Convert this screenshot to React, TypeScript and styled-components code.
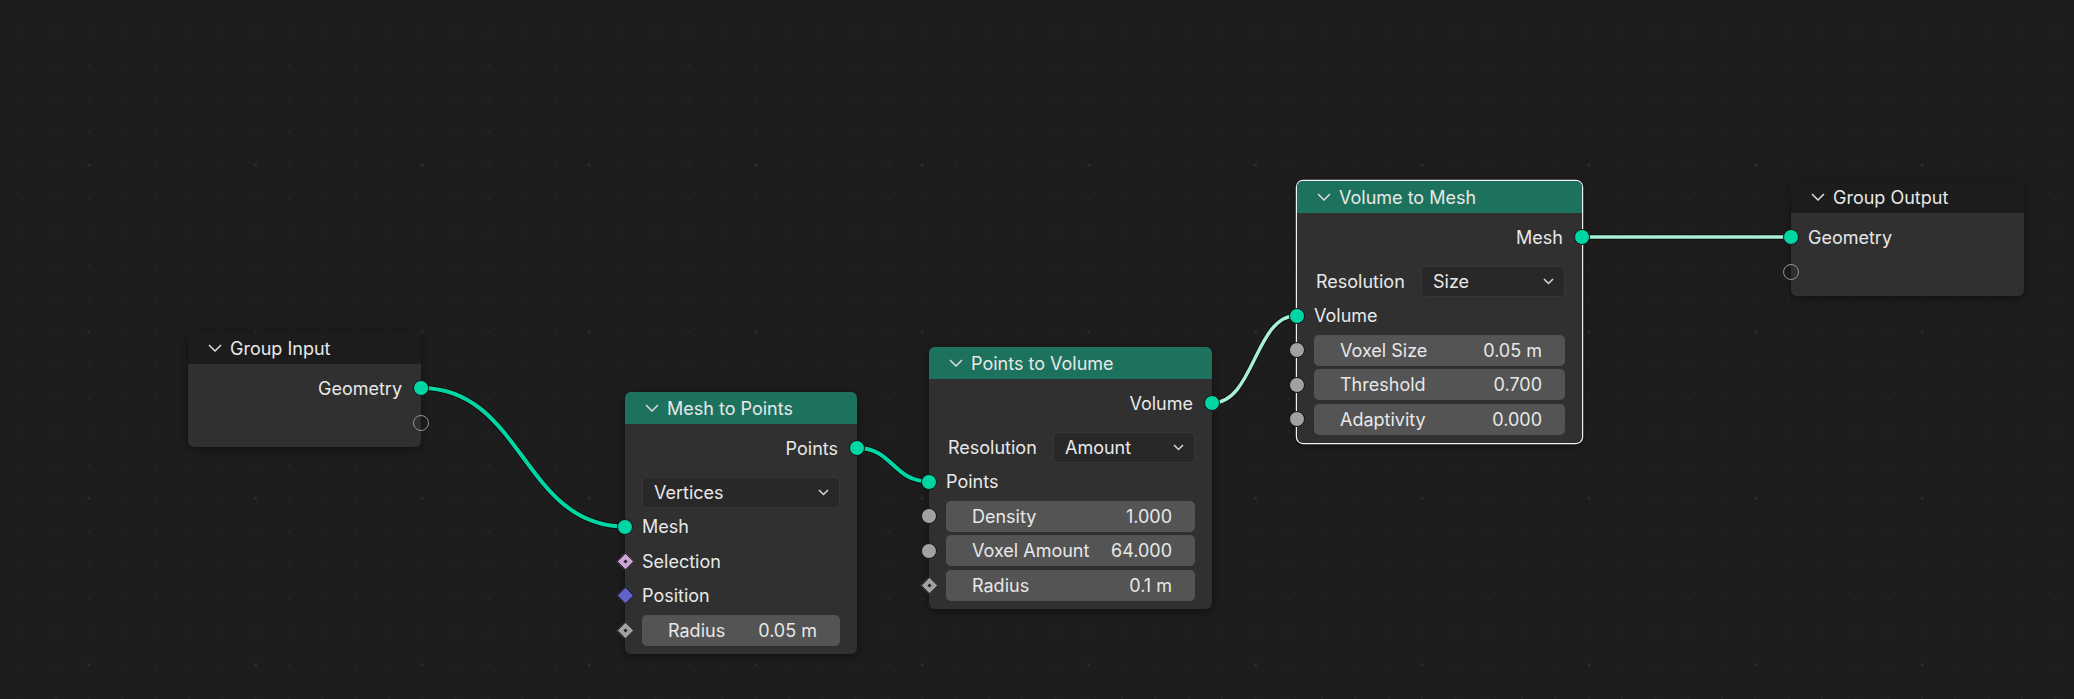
import React from 'react';
import styled, { createGlobalStyle, css } from 'styled-components';

const GlobalStyle = createGlobalStyle`
  html, body { margin: 0; padding: 0; background: #1d1d1d; }
  body { font-family: Inter, "Noto Sans", sans-serif; }
`;

const ROW = 34.5;

const Canvas = styled.div`
  position: relative;
  width: 2074px;
  height: 699px;
  overflow: hidden;
  background-color: #1d1d1d;
  background-image:
    radial-gradient(circle, #2d2d2d 0 1.2px, transparent 1.7px),
    radial-gradient(circle, #262626 0 1px, transparent 1.5px);
  background-size: 166.667px 166.667px, 33.333px 33.333px;
  background-position: 5.67px 81.67px, 5.67px 15.67px;
`;

const WireLayer = styled.svg`
  position: absolute;
  left: 0;
  top: 0;
  width: 2074px;
  height: 699px;
  pointer-events: none;
`;

const Node = styled.div<{ $x: number; $y: number; $w: number; $selected?: boolean }>`
  position: absolute;
  left: ${(p) => p.$x}px;
  top: ${(p) => p.$y}px;
  width: ${(p) => p.$w}px;
  display: flex;
  flex-direction: column;
  background: #303030;
  border-radius: 6px;
  box-shadow: 0 2px 10px rgba(0, 0, 0, 0.45);
  ${(p) =>
    p.$selected &&
    css`
      box-shadow: 0 0 0 1.2px #f2f2f2, 0 2px 10px rgba(0, 0, 0, 0.45);
    `}
  color: #e8e8e8;
  font-size: 18px;
`;

const Header = styled.div<{ $tone: 'geo' | 'group' }>`
  height: 32px;
  display: flex;
  align-items: center;
  gap: 8px;
  padding-left: 20px;
  border-radius: 6px 6px 0 0;
  background: ${(p) => (p.$tone === 'geo' ? '#1d725e' : '#1c1c1c')};
  color: #e8e8e8;
`;

const Body = styled.div`
  display: flex;
  flex-direction: column;
  padding: 6.75px 17px;
`;

const Row = styled.div<{ $out?: boolean; $gapAfter?: boolean }>`
  position: relative;
  height: ${ROW}px;
  display: flex;
  align-items: center;
  justify-content: ${(p) => (p.$out ? 'flex-end' : 'flex-start')};
  margin-bottom: ${(p) => (p.$gapAfter ? 9.5 : 0)}px;
  white-space: nowrap;
`;

const Label = styled.span<{ $out?: boolean }>`
  padding: ${(p) => (p.$out ? '0 2px 0 0' : '0')};
`;

type SocketKind = 'geo' | 'hollow' | 'float' | 'fieldFloat' | 'fieldBool' | 'vector';

const socketColor: Record<SocketKind, string> = {
  geo: '#00d6a3',
  hollow: 'transparent',
  float: '#a1a1a1',
  fieldFloat: '#a1a1a1',
  fieldBool: '#cca6d6',
  vector: '#6363c7',
};

const Socket = styled.span<{ $side: 'left' | 'right'; $kind: SocketKind }>`
  position: absolute;
  top: 50%;
  box-sizing: border-box;
  z-index: 2;
  ${(p) => (p.$side === 'left' ? 'left: -25px;' : 'right: -25px;')}
  ${(p) => {
    const c = socketColor[p.$kind];
    if (p.$kind === 'geo' || p.$kind === 'float') {
      return css`
        width: 16px;
        height: 16px;
        margin-top: -8px;
        border-radius: 50%;
        background: ${c};
        border: 1.3px solid #151515;
      `;
    }
    if (p.$kind === 'hollow') {
      return css`
        width: 16px;
        height: 16px;
        margin-top: -8px;
        border-radius: 50%;
        background: transparent;
        border: 1.8px solid #949494;
      `;
    }
    return css`
      width: 13px;
      height: 13px;
      margin-top: -6.5px;
      ${p.$side === 'left' ? 'margin-left: 1.5px;' : 'margin-right: 1.5px;'}
      transform: rotate(45deg);
      background: ${c};
      border: 1.3px solid #151515;
      ${p.$kind !== 'vector' &&
      css`
        &::after {
          content: '';
          position: absolute;
          left: 50%;
          top: 50%;
          width: 3px;
          height: 3px;
          margin: -1.5px 0 0 -1.5px;
          background: #222;
        }
      `}
    `;
  }}
`;

const Dropdown = styled.div`
  flex: 1;
  height: 31px;
  box-sizing: border-box;
  display: flex;
  align-items: center;
  justify-content: space-between;
  padding: 0 10px 0 11px;
  background: #282828;
  border: 1px solid #363636;
  border-radius: 5px;
`;

const SplitLabel = styled.span`
  flex: 0 0 107px;
  padding-left: 2px;
  box-sizing: border-box;
`;

const Field = styled.div`
  flex: 1;
  height: 31px;
  box-sizing: border-box;
  display: flex;
  align-items: center;
  justify-content: space-between;
  padding: 0 23px 0 26px;
  background: #545454;
  border-radius: 5px;
`;

const Chevron = () => (
  <svg width="14" height="8" viewBox="0 0 14 8">
    <polyline points="1,1 7,7 13,1" fill="none" stroke="#dcdcdc" strokeWidth="1.5" />
  </svg>
);

const SmallChevron = () => (
  <svg width="11" height="7" viewBox="0 0 11 7">
    <polyline points="1,1 5.5,5.5 10,1" fill="none" stroke="#d8d8d8" strokeWidth="1.5" />
  </svg>
);

const Title: React.FC<{ tone: 'geo' | 'group'; text: string }> = ({ tone, text }) => (
  <Header $tone={tone}>
    <Chevron />
    <span>{text}</span>
  </Header>
);

const OutRow: React.FC<{ label?: string; kind: SocketKind; gapAfter?: boolean }> = ({ label, kind, gapAfter }) => (
  <Row $out $gapAfter={gapAfter}>
    {label && <Label $out>{label}</Label>}
    <Socket $side="right" $kind={kind} />
  </Row>
);

const InRow: React.FC<{ label?: string; kind: SocketKind }> = ({ label, kind }) => (
  <Row>
    <Socket $side="left" $kind={kind} />
    {label && <Label>{label}</Label>}
  </Row>
);

const FieldRow: React.FC<{ label: string; value: string; kind: SocketKind }> = ({ label, value, kind }) => (
  <Row>
    <Socket $side="left" $kind={kind} />
    <Field>
      <span>{label}</span>
      <span>{value}</span>
    </Field>
  </Row>
);

const SelectRow: React.FC<{ label?: string; value: string }> = ({ label, value }) => (
  <Row>
    {label && <SplitLabel>{label}</SplitLabel>}
    <Dropdown>
      <span>{value}</span>
      <SmallChevron />
    </Dropdown>
  </Row>
);

const wire = (x1: number, y1: number, x2: number, y2: number) => {
  const h = Math.abs(x2 - x1) * 0.5;
  return `M ${x1} ${y1} C ${x1 + h} ${y1}, ${x2 - h} ${y2}, ${x2} ${y2}`;
};

const wires = [
  { d: wire(421, 388, 625, 526.5), c: '#00d6a3', w: 4 },
  { d: wire(857, 448, 929, 481.5), c: '#00d6a3', w: 4 },
  { d: wire(1212, 403, 1297, 315.5), c: '#a8eed9', w: 3.4 },
  { d: wire(1582, 237, 1791, 237), c: '#a8eed9', w: 3.4 },
];

export default function App() {
  return (
    <>
      <GlobalStyle />
      <Canvas>
        <WireLayer viewBox="0 0 2074 699">
          {wires.map((w, i) => (
            <g key={i}>
              <path d={w.d} fill="none" stroke="rgba(0,0,0,0.55)" strokeWidth={w.w + 2} />
              <path d={w.d} fill="none" stroke={w.c} strokeWidth={w.w} />
            </g>
          ))}
        </WireLayer>

        <Node $x={188} $y={332} $w={233}>
          <Title tone="group" text="Group Input" />
          <Body>
            <OutRow label="Geometry" kind="geo" />
            <OutRow kind="hollow" />
          </Body>
        </Node>

        <Node $x={625} $y={392} $w={232}>
          <Title tone="geo" text="Mesh to Points" />
          <Body>
            <OutRow label="Points" kind="geo" gapAfter />
            <SelectRow value="Vertices" />
            <InRow label="Mesh" kind="geo" />
            <InRow label="Selection" kind="fieldBool" />
            <InRow label="Position" kind="vector" />
            <FieldRow label="Radius" value="0.05 m" kind="fieldFloat" />
          </Body>
        </Node>

        <Node $x={929} $y={347} $w={283}>
          <Title tone="geo" text="Points to Volume" />
          <Body>
            <OutRow label="Volume" kind="geo" gapAfter />
            <SelectRow label="Resolution" value="Amount" />
            <InRow label="Points" kind="geo" />
            <FieldRow label="Density" value="1.000" kind="float" />
            <FieldRow label="Voxel Amount" value="64.000" kind="float" />
            <FieldRow label="Radius" value="0.1 m" kind="fieldFloat" />
          </Body>
        </Node>

        <Node $x={1297} $y={181} $w={285} $selected>
          <Title tone="geo" text="Volume to Mesh" />
          <Body>
            <OutRow label="Mesh" kind="geo" gapAfter />
            <SelectRow label="Resolution" value="Size" />
            <InRow label="Volume" kind="geo" />
            <FieldRow label="Voxel Size" value="0.05 m" kind="float" />
            <FieldRow label="Threshold" value="0.700" kind="float" />
            <FieldRow label="Adaptivity" value="0.000" kind="float" />
          </Body>
        </Node>

        <Node $x={1791} $y={181} $w={233}>
          <Title tone="group" text="Group Output" />
          <Body>
            <InRow label="Geometry" kind="geo" />
            <InRow kind="hollow" />
          </Body>
        </Node>
      </Canvas>
    </>
  );
}
